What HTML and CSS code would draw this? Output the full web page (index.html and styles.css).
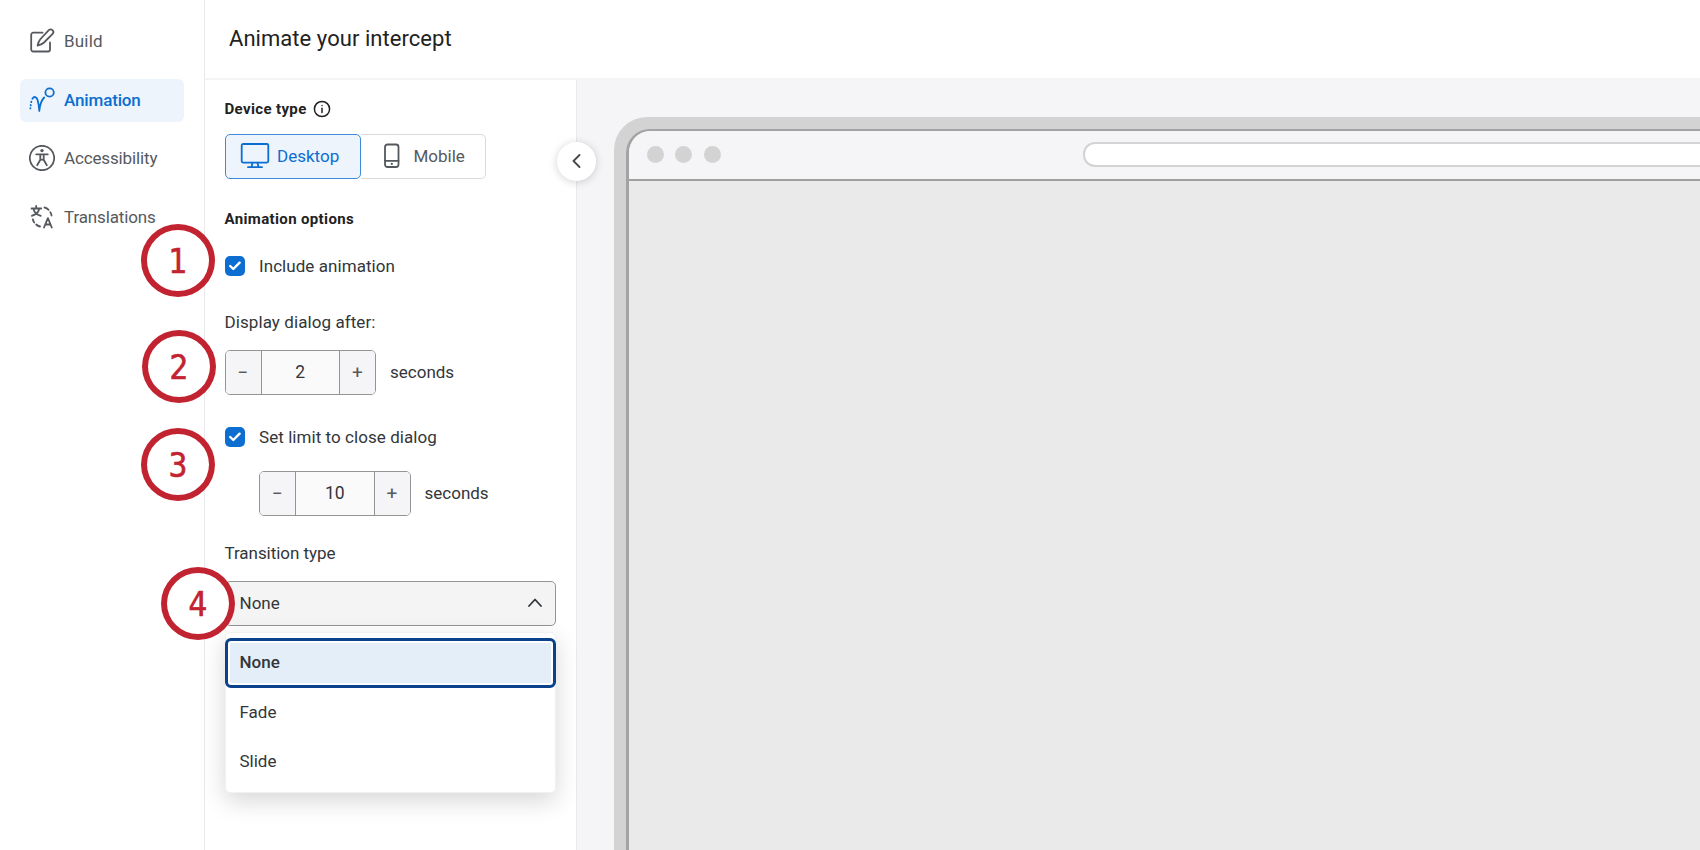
FILE: index.html
```html
<!DOCTYPE html>
<html lang="en">
<head>
    <meta charset="UTF-8">
    <meta name="viewport" content="width=device-width, initial-scale=1.0">
    <title>Animate your intercept</title>
    <link rel="stylesheet" href="styles.css">
</head>
<body>
<div class="app">
    <nav class="sidebar">
        <a class="nav-item build">
            <svg width="26" height="26" viewBox="0 0 26 26"><path d="M13.500 4.700H4.200A2 2 0 0 0 2.200 6.700V21.500A2 2 0 0 0 4.200 23.500H19A2 2 0 0 0 21 21.500V14.500"/><path d="M8.600 17.500C9.200 14.500 10 12.800 11.500 11L19.800 2.200A2.600 2.600 0 0 1 23.600 5.800L15 14.500C13.200 16.200 11.500 17 8.600 17.500Z"/></svg>
            <span>Build</span>
        </a>
        <a class="nav-item active">
            <svg width="26" height="26" viewBox="0 0 26 26"><circle cx="20.600" cy="5.500" r="4.200"/><path d="M3.400 11.800C5.200 9 7.500 9.500 8.600 13C9.500 16 10 20 10.300 24C10.800 18.500 12 13.500 15.200 10.500"/><path d="M2.300 14.600V15.200M1.700 18V18.400M1.400 21.200V21.400"/></svg>
            <span>Animation</span>
        </a>
        <a class="nav-item access">
            <svg width="26" height="26" viewBox="0 0 26 26"><circle cx="13" cy="13" r="12.200"/><circle cx="13" cy="5.600" r="1.700" class="solid"/><path d="M7.200 9.300H18.800M11.300 9.800V14.800L8.200 20.200M14.700 9.800V14.800L17.800 20.200M11.300 15Q13 14.200 14.700 15"/></svg>
            <span>Accessibility</span>
        </a>
        <a class="nav-item translate">
            <svg width="26" height="26" viewBox="0 0 26 26"><path d="M2.500 4.500H12.200M7.200 2V4.500M4.400 4.500C5.200 8.500 8 10.800 11.800 11.800M10.300 4.500C9.500 8.500 6.500 10.800 2.800 11.800"/><path d="M15.500 3.500Q18 4 19.600 5.800M21.300 8.200Q22.300 9.600 22.500 11.500"/><path d="M3.800 15.300Q4.200 17.200 5.200 18.500M7.200 20.500Q8.800 22 11 22.500"/><path d="M15 23.500L18.900 14.200L22.800 23.500M16.200 20.500H21.600"/></svg>
            <span>Translations</span>
        </a>
    </nav>

    <div class="main">
        <header class="header"><h1>Animate your intercept</h1></header>
        <div class="content">
            <section class="panel">
                <div class="heading device-heading">
                    <span class="device-label">Device type</span>
                    <svg width="18" height="18" viewBox="0 0 18 18"><circle cx="9" cy="9" r="7.600"/><path d="M9 8.300V12.500M9 5.400V5.600"/></svg>
                </div>
                <div class="toggle">
                    <button class="toggle-btn selected">
                        <svg width="30" height="26" viewBox="0 0 30 26"><rect x="1.700" y="1" width="26.600" height="18.600" rx="1.500"/><path d="M12.500 19.600L11.500 24M17.500 19.600L18.500 24M8 24.200H22"/></svg>
                        <span>Desktop</span>
                    </button>
                    <button class="toggle-btn mobile">
                        <svg width="16" height="26" viewBox="0 0 16 26"><rect x="1" y="1.500" width="13.500" height="22.500" rx="2.500"/><path d="M1 17.800H14.500"/><circle cx="7.800" cy="20.900" r="1.100" class="solid"/></svg>
                        <span>Mobile</span>
                    </button>
                </div>

                <div class="heading options-heading"><span>Animation options</span></div>
                <label class="check">
                    <span class="box"><svg width="12" height="10" viewBox="0 0 12 10"><path d="M1.200 5L4.300 8L10.600 1.700"/></svg></span>
                    <span class="include">Include animation</span>
                </label>

                <p class="label display"><span>Display dialog after:</span></p>
                <div class="stepper-row">
                    <div class="stepper"><button>−</button><span class="value">2</span><button>+</button></div>
                    <span class="unit">seconds</span>
                </div>

                <label class="check limit-check">
                    <span class="box"><svg width="12" height="10" viewBox="0 0 12 10"><path d="M1.200 5L4.300 8L10.600 1.700"/></svg></span>
                    <span class="limit">Set limit to close dialog</span>
                </label>
                <div class="stepper-row indent">
                    <div class="stepper"><button>−</button><span class="value">10</span><button>+</button></div>
                    <span class="unit">seconds</span>
                </div>

                <p class="label transition"><span>Transition type</span></p>
                <div class="select">
                    <span>None</span>
                    <svg width="14" height="9" viewBox="0 0 14 9"><path d="M1 8L7 1.500L13 8"/></svg>
                    <div class="menu">
                        <div class="option current">None</div>
                        <div class="option">Fade</div>
                        <div class="option">Slide</div>
                    </div>
                </div>

                <button class="collapse"><svg width="9" height="14" viewBox="0 0 9 14"><path d="M7.500 1L1.500 7L7.500 13"/></svg></button>
            </section>

            <section class="preview">
                <div class="frame">
                    <div class="window">
                        <div class="window-bar">
                            <i class="dot"></i><i class="dot"></i><i class="dot"></i>
                            <div class="address"></div>
                        </div>
                    </div>
                </div>
            </section>
        </div>
    </div>

    <!-- numbered callouts -->
    <div class="callout one">1</div>
    <div class="callout two">2</div>
    <div class="callout three">3</div>
    <div class="callout four">4</div>
</div>
</body>
</html>
```
FILE: styles.css
```css
* {
    box-sizing: border-box;
}
body {
    margin: 0;
    font-family: Roboto, "Liberation Sans", sans-serif;
    font-size: 17px;
    color: #32363a;
    background: #fff;
}
button {
    font: inherit;
    padding: 0;
    cursor: pointer;
}
svg {
    display: block;
    flex: none;
    fill: none;
    stroke: currentColor;
    stroke-width: 1.8;
    stroke-linecap: round;
    stroke-linejoin: round;
}
.solid {
    fill: currentColor;
    stroke: none;
}
.app {
    position: relative;
    display: flex;
    width: 100%;
    height: 850px;
    overflow: hidden;
}

/* sidebar */
.sidebar {
    flex: none;
    width: 205px;
    padding: 20.300px 20px 0;
    border-right: 1px solid #e9e9eb;
    display: flex;
    flex-direction: column;
    gap: 15.500px;
}
.nav-item {
    height: 43px;
    padding: 0 0 1px 9px;
    border-radius: 6px;
    display: flex;
    align-items: center;
    gap: 9px;
    color: #55595e;
}
.nav-item.active {
    background: #edf4fc;
    color: #0b6ed0;
    font-weight: 500;
    letter-spacing: -0.15px;
}
.access,
.translate {
    letter-spacing: -0.14px;
}
.build {
    letter-spacing: 0.2px;
}

/* right side */
.main {
    flex: 1;
    min-width: 0;
    display: flex;
    flex-direction: column;
}
.header {
    height: 80px;
    padding: 0 24px 1px;
    border-bottom: 2px solid #f4f4f5;
    display: flex;
    align-items: center;
}
h1 {
    margin: 0;
    font-size: 22px;
    font-weight: 400;
    letter-spacing: 0.05px;
    color: #222;
}
.content {
    flex: 1;
    display: flex;
}
.panel {
    position: relative;
    flex: none;
    width: 371.500px;
    padding: 19px 20px 0 19.500px;
    border-right: 1px solid #e9e9eb;
}
.heading {
    height: 20px;
    display: flex;
    align-items: center;
    gap: 6px;
    font-size: 15px;
    font-weight: 700;
    letter-spacing: 0.36px;
    color: #222;
}
.heading svg {
    stroke-width: 1.5;
}
.toggle {
    display: flex;
    margin-top: 15px;
    height: 45px;
}
.toggle-btn {
    display: flex;
    align-items: center;
    width: 136.500px;
    padding: 0 0 2px 14.500px;
    gap: 7px;
    background: #fff;
    border: 1px solid #d9dadc;
    border-left: 0;
    border-radius: 0 5px 5px 0;
    color: #55595e;
}
.toggle-btn.selected {
    background: #edf4fc;
    border: 1px solid #3c8ad9;
    border-radius: 5px;
    color: #0b6ed0;
}
.toggle-btn.mobile {
    width: 125px;
    padding-left: 22.500px;
    gap: 14px;
}
.options-heading {
    margin-top: 30px;
}
.check {
    height: 20px;
    margin-top: 27px;
    display: flex;
    align-items: center;
    gap: 14.500px;
    letter-spacing: 0.06px;
}
.box {
    width: 20px;
    height: 20px;
    border-radius: 5px;
    background: #0b6ed0;
    color: #fff;
    display: grid;
    place-items: center;
}
.box svg {
    stroke-width: 2.4;
}
.label {
    height: 20px;
    line-height: 20px;
    margin: 36px 0 18px;
    letter-spacing: 0.08px;
}
.stepper-row {
    display: flex;
    align-items: center;
    gap: 14px;
}
.stepper {
    display: flex;
    width: 151.500px;
    height: 45px;
    border: 1px solid #949494;
    border-radius: 5px;
    overflow: hidden;
}
.stepper button {
    width: 35px;
    border: 0;
    background: #f5f5f7;
    color: #55595e;
    font-size: 19px;
}
.value {
    flex: 1;
    border: solid #949494;
    border-width: 0 1px;
    background: #fafafa;
    line-height: 43px;
    text-align: center;
    font-size: 17.500px;
}
.unit {
    padding-bottom: 1px;
}
.limit-check {
    margin-top: 32px;
}
.indent {
    margin: 24px 0 0 34.500px;
}
.label.transition {
    margin: 27px 0 18px;
    letter-spacing: -0.05px;
}
.select {
    position: relative;
    height: 45px;
    padding: 0 13px 2px 14px;
    border: 1px solid #949494;
    border-radius: 5px;
    background: #f4f4f4;
    display: flex;
    align-items: center;
    justify-content: space-between;
}
.menu {
    position: absolute;
    top: 50px;
    left: -1px;
    width: 331.500px;
    height: 161px;
    padding-top: 5px;
    border: 1px solid #f1f1f1;
    border-radius: 5px;
    background: #fff;
    box-shadow: 0 8px 24px rgba(0, 0, 0, 0.16);
}
.option {
    height: 49.500px;
    padding-left: 14px;
    line-height: 49px;
}
.option.current {
    margin: 0 -1px;
    padding-left: 12px;
    line-height: 43px;
    background: #e4eef9;
    border: 3px solid #0b428c;
    border-radius: 6px;
    box-shadow: inset 0 0 0 2px #fff;
    font-weight: 500;
}
.collapse {
    position: absolute;
    top: 61.500px;
    right: -20px;
    width: 39px;
    height: 39px;
    border: 0;
    border-radius: 50%;
    background: #fff;
    color: #44484c;
    box-shadow: 0 1px 8px rgba(0, 0, 0, 0.18);
    display: grid;
    place-items: center;
}

/* browser preview */
.preview {
    flex: 1;
    min-width: 0;
    padding: 37px 0 0 37px;
    background: #f5f5f7;
    overflow: hidden;
}
.frame {
    height: 100%;
    padding: 12px 0 0 12.500px;
    border-radius: 33px 0 0 0;
    background: #d3d3d3;
}
.window {
    height: 100%;
    border: solid #a3a3a3;
    border-width: 2px 0 0 3px;
    border-radius: 24px 0 0 0;
    background: #eaeaea;
    overflow: hidden;
}
.window-bar {
    height: 50px;
    padding: 0 0 1px 17.500px;
    border-bottom: 2px solid #a0a0a0;
    background: #f5f5f7;
    display: flex;
    align-items: center;
    gap: 11.500px;
}
.dot {
    width: 17px;
    height: 17px;
    border-radius: 50%;
    background: #d3d3d3;
}
.address {
    flex: 1;
    height: 25px;
    margin-left: 350.500px;
    border: 2px solid #d3d3d3;
    border-right: 0;
    border-radius: 12px 0 0 12px;
    background: #fff;
}

/* callouts */
.callout {
    position: absolute;
    left: 141px;
    width: 74px;
    height: 73px;
    border: 6px solid #c22331;
    border-radius: 50%;
    background: #fff;
    color: #c22331;
    font-family: "DejaVu Sans Condensed", "DejaVu Sans", sans-serif;
    font-stretch: condensed;
    font-size: 33px;
    line-height: 63px;
    text-align: center;
    -webkit-text-stroke: 0.6px #c22331;
}
.one {
    top: 224px;
}
.two {
    top: 330px;
    left: 142px;
}
.three {
    top: 428px;
}
.four {
    top: 567px;
    left: 161px;
}
```
